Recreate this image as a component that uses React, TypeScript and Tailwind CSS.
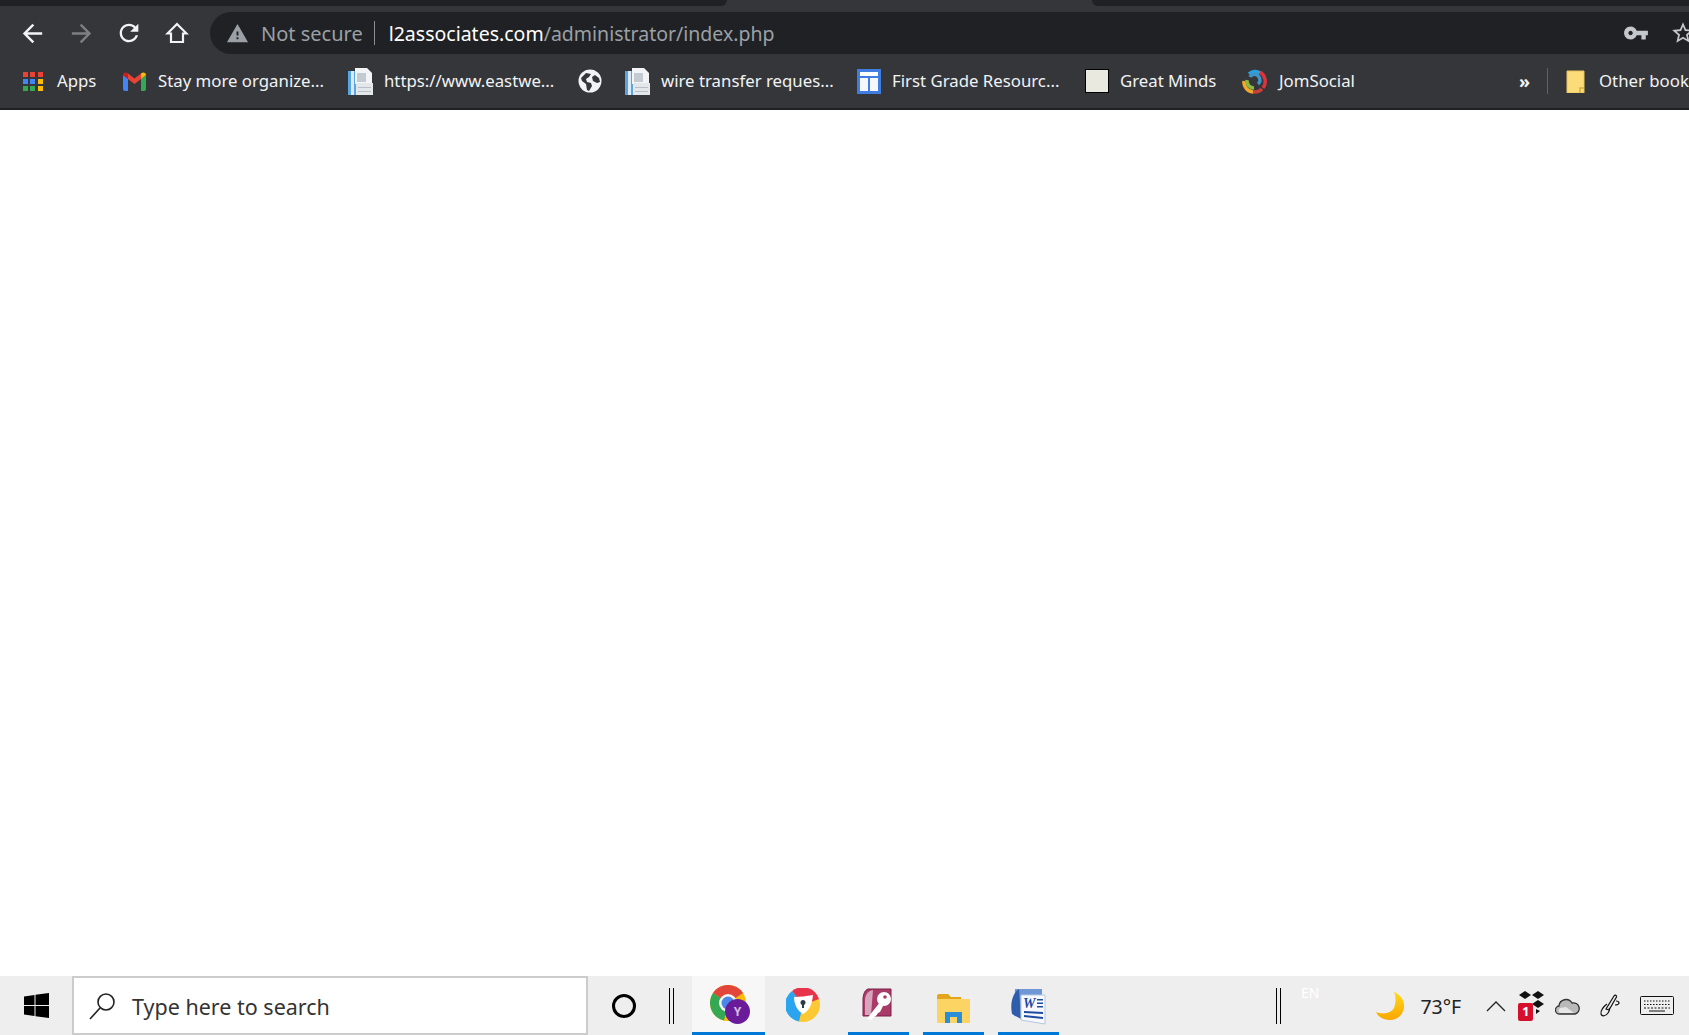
const uiFont = "font-['Noto_Sans','Open_Sans',sans-serif]";

const AppsIcon = () => {
  const colors = [
    "#ea4335", "#ea4335", "#ea4335",
    "#4285f4", "#4285f4", "#fbbc05",
    "#34a853", "#34a853", "#fbbc05",
  ];
  return (
    <div className="grid w-[20px] grid-cols-3 gap-[2px]">
      {colors.map((c, i) => (
        <div key={i} className="h-[5px] w-[5px]" style={{ backgroundColor: c }} />
      ))}
    </div>
  );
};

const GmailIcon = () => (
  <svg width="23" height="19" viewBox="0 0 23 19">
    <path d="M0 3v14a2 2 0 0 0 2 2h3V7z" fill="#4285f4" />
    <path d="M23 3v14a2 2 0 0 1-2 2h-3V7z" fill="#34a853" />
    <path d="M5 7l6.5 5L18 7V1.500l-6.500 5-6.500-5z" fill="#ea4335" />
    <path d="M0 3c0-2.500 3-3.500 5-1.500V7L0 3z" fill="#c5221f" />
    <path d="M23 3c0-2.500-3-3.500-5-1.500V7l5-4z" fill="#fbbc05" />
  </svg>
);

const DocIcon = () => (
  <svg width="25" height="27" viewBox="0 0 25 27">
    <path d="M0 3h8v24H0z" fill="#5aa5dc" />
    <path d="M3 3h3v24H3z" fill="#dbe9f4" />
    <path d="M7 0h12l5 5v11H7z" fill="#f2f4f6" />
    <path d="M9 5h9v9H9z" fill="#c3cad1" />
    <path d="M8 15h17v12H8z" fill="#e4e7ea" />
    <path d="M10 19h13v1H10zM10 23h13v1H10z" fill="#b8bfc6" />
  </svg>
);

const GlobeIcon = () => (
  <svg width="24" height="24" viewBox="0 0 24 24">
    <circle cx="12" cy="12" r="11.500" fill="#f1f3f4" />
    <path d="M3 9l5-5 5 1-2 3-3 2 1 3 4 1 1 3-3 5-2-1-1-6-4-3zM17 6l4 3 1 4-3 1-4-2-1-4z" fill="#35363a" />
  </svg>
);

const GradeIcon = () => (
  <svg width="24" height="25" viewBox="0 0 24 25">
    <rect width="24" height="25" fill="#3f7ee0" />
    <path d="M3 3h18v4H3z" fill="#fff" />
    <path d="M3 9h8v13H3zM13 9h8v13h-8z" fill="#f5f7fb" />
  </svg>
);

const JomIcon = () => (
  <svg width="26" height="26" viewBox="0 0 26 26" fill="none" strokeWidth="3.500">
    <path d="M8 6a9 9 0 0 1 11-1" stroke="#29a3dd" />
    <path d="M19 4a11 11 0 0 1 3 16" stroke="#d8363c" />
    <path d="M21 21a11 11 0 0 1-9 3" stroke="#c8403c" />
    <path d="M3 13a10 10 0 0 0 9 11" stroke="#f0a92c" />
    <path d="M6 12a7 7 0 0 0 7 8" stroke="#8cbb3f" />
    <path d="M9 9a5 5 0 0 1 9 0 5 5 0 0 1-1 7" stroke="#3f95c8" />
  </svg>
);

const GreatIcon = () => <div className="h-[24px] w-[24px] border border-black bg-[#e9e9df]" />;

const FolderTag = () => (
  <svg width="19" height="23" viewBox="0 0 19 23">
    <path d="M1 1h17v22H1z" fill="#fbdc79" stroke="#e8c45c" />
    <path d="M14 23v-5h4" fill="none" stroke="#d9ad3c" strokeWidth="1.500" />
  </svg>
);

const bookmarks = [
  { name: "Apps", icon: <AppsIcon />, cls: "w-[101px] pl-[1px]", gap: "gap-[14px]" },
  { name: "Stay more organize...", icon: <GmailIcon />, cls: "w-[225px]", gap: "gap-[12px]" },
  { name: "https://www.eastwe...", icon: <DocIcon />, cls: "w-[230px]", gap: "gap-[11px]" },
  { name: "", icon: <GlobeIcon />, cls: "w-[47px]", gap: "" },
  { name: "wire transfer reques...", icon: <DocIcon />, cls: "w-[232px]", gap: "gap-[11px]" },
  { name: "First Grade Resourc...", icon: <GradeIcon />, cls: "w-[228px]", gap: "gap-[11px]" },
  { name: "Great Minds", icon: <GreatIcon />, cls: "w-[156px]", gap: "gap-[11px]" },
  { name: "JomSocial", icon: <JomIcon />, cls: "w-[284px]", gap: "gap-[12px]" },
];

const WinLogo = () => (
  <svg width="25" height="25" viewBox="0 0 25 25" fill="#000">
    <path d="M0 3.500l10.500-1.500v10H0zM11.500 1.800L25 0v12H11.500zM0 13h10.500v10L0 21.500zM11.500 13H25v12l-13.500-1.800z" />
  </svg>
);

const ChromeIcon = () => (
  <div className="relative h-[44px] w-[44px]">
    <svg width="36" height="36" viewBox="0 0 36 36" className="absolute left-0 top-0">
      <circle cx="18" cy="18" r="18" fill="#fbbc05" />
      <path d="M18 18L3 8A18 18 0 0 1 33 8z" fill="#e2463a" />
      <path d="M18 18L3 8A18 18 0 0 0 14 35.500z" fill="#35a853" />
      <circle cx="18" cy="18" r="9" fill="#f4f4f4" />
      <circle cx="18" cy="18" r="6.500" fill="#4b87e8" />
    </svg>
    <div className="absolute left-[15px] top-[14px] flex h-[25px] w-[25px] items-center justify-center rounded-full bg-[#6a1b9a] text-[12px] font-bold text-[#d9b8e8]">
      Y
    </div>
  </div>
);

const SecureIcon = () => (
  <svg width="34" height="34" viewBox="0 0 34 34">
    <circle cx="17" cy="17" r="17" fill="#fcc934" />
    <path d="M17 17L6 3A17 17 0 0 1 33 11z" fill="#e8344a" />
    <path d="M17 17L6 3A17 17 0 0 0 13 33.500z" fill="#2aa4ef" />
    <path d="M8 9c6 0 12-1 19-2-1 9-3 15-10 19-5-3-9-9-9-17z" fill="#fff" />
    <circle cx="17" cy="14.500" r="2.500" fill="#2b3a4a" />
    <path d="M16 15h2v5h-2z" fill="#2b3a4a" />
  </svg>
);

const AccessIcon = () => (
  <svg width="32" height="33" viewBox="0 0 32 33">
    <path d="M7 1h23v27H2V12C2 6 4 2 7 1z" fill="#a83b68" stroke="#7a2148" />
    <path d="M4 12C4 7 7 3 12 2L10 27H4z" fill="#d9a4bb" />
    <circle cx="23" cy="11" r="7" fill="#fff" />
    <path d="M20 13L8 28l-2 3 4 1 3-3 2-1 2-3 2-1 3-6z" fill="#fff" />
    <circle cx="24" cy="9" r="1.800" fill="#a83b68" />
  </svg>
);

const ExplorerIcon = () => (
  <svg width="33" height="29" viewBox="0 0 33 29">
    <path d="M0 2a2 2 0 0 1 2-2h9l3 3h10v3H0z" fill="#e3a51a" />
    <path d="M0 5h33v23a1 1 0 0 1-1 1H1a1 1 0 0 1-1-1z" fill="#fcd463" />
    <path d="M8 18h17v11h-5v-6h-7v6H8z" fill="#2a8fd8" />
  </svg>
);

const WordIcon = () => (
  <svg width="36" height="37" viewBox="0 0 36 37">
    <path d="M5 1h27v30L4 28z" fill="#6f97d6" />
    <path d="M2 26C0 16 2 6 9 1l2 30z" fill="#2f5cab" />
    <path d="M11 7h24v29L11 32z" fill="#f7f9fd" stroke="#b7c6df" />
    <text x="13" y="20" fontSize="14" fontWeight="700" fontStyle="italic" fill="#1e4aa0" fontFamily="Liberation Serif, serif">W</text>
    <path d="M27 11h6v1.500h-6zM27 14.500h6V16h-6zM27 18h6v1.500h-6zM14 23l19 1v2l-19-1zM14 27l19 2v2l-19-2z" fill="#1e4aa0" />
  </svg>
);

const MoonIcon = () => (
  <svg width="30" height="30" viewBox="0 0 30 30">
    <defs>
      <linearGradient id="moon" x1="0" y1="0" x2="0" y2="1">
        <stop offset="0" stopColor="#ffd91a" />
        <stop offset="1" stopColor="#f9a602" />
      </linearGradient>
    </defs>
    <path d="M19 1c7 3 11 9 10 16-1 7-7 12-14 12-6 0-12-3-14-8 8 3 15 1 18-4 2-5 2-11 0-16z" fill="url(#moon)" />
  </svg>
);

const DropboxIcon = () => (
  <div className="relative h-[30px] w-[27px]">
    <svg width="27" height="24" viewBox="0 0 27 24" className="absolute left-0 top-0" fill="#111">
      <path d="M7 0l6 4-6 4-6-4zM20 0l6 4-6 4-6-4zM20 9l6 4-6 4-6-4zM18 18l4 2-4 3z" />
    </svg>
    <div className="absolute bottom-0 left-0 flex h-[18px] w-[15px] items-center justify-center rounded-[2px] bg-[#d4102c] text-[13px] font-bold leading-none text-white">
      1
    </div>
  </div>
);

const CloudIcon = () => (
  <svg width="25" height="18" viewBox="0 0 25 18">
    <path d="M5 17a4 4 0 0 1-1-8 7 7 0 0 1 13-3 5.500 5.500 0 0 1 3 11z" fill="#b9b9b9" stroke="#333" strokeWidth="1.300" />
    <path d="M5 16a3 3 0 0 1 0-5l6-1 8 6z" fill="#e6e6e6" />
  </svg>
);

const PenIcon = () => (
  <svg width="22" height="23" viewBox="0 0 22 23" fill="none" stroke="#111" strokeWidth="1.200">
    <path d="M7 15L15 2c1-1.500 3-.5 2.500 1L10 16z" />
    <path d="M8 10c-3 2-7 7-6 10s5 2 7-1 2-4 1-5" />
    <path d="M17 7c2 0 3 1 3 2s-2 2-4 2" />
  </svg>
);

const KeyboardIcon = () => (
  <svg width="34" height="19" viewBox="0 0 34 19" fill="none" stroke="#111">
    <rect x="0.500" y="0.500" width="33" height="18" rx="1" />
    <path d="M4 5h26M4 8.500h26" strokeDasharray="1.500 1.500" />
    <path d="M4 12h26" strokeDasharray="2 1.500" />
    <path d="M9 15h16" />
  </svg>
);

const Divider = () => (
  <div className="flex h-[36px] gap-[3px]">
    <div className="w-px bg-black" />
    <div className="w-px bg-black" />
  </div>
);

export default function App() {
  return (
    <div className={`flex h-screen w-screen flex-col overflow-hidden bg-white ${uiFont}`}>
      <header className="bg-[#35363a]">
        {/* tab strip, active tab is the gap in the middle */}
        <div className="flex h-[6px]">
          <div className="w-[727px] rounded-br-[6px] bg-[#202124]" />
          <div className="w-[365px]" />
          <div className="flex-1 rounded-bl-[6px] bg-[#202124]" />
        </div>
        <div className="mt-[6px] flex h-[42px] items-center">
          <div className="flex w-[210px] items-center text-white">
            <svg width="29" height="29" viewBox="0 0 24 24" fill="#f1f3f4" className="ml-[18px]">
              <path d="M20 11H7.830l5.590-5.590L12 4l-8 8 8 8 1.410-1.410L7.830 13H20v-2z" />
            </svg>
            <svg width="29" height="29" viewBox="0 0 24 24" fill="#7d7f83" className="ml-[20px]">
              <path d="M12 4l-1.410 1.410L16.170 11H4v2h12.170l-5.580 5.590L12 20l8-8z" />
            </svg>
            <svg width="28" height="28" viewBox="0 0 24 24" fill="#f1f3f4" className="ml-[19px]">
              <path d="M17.650 6.350C16.200 4.900 14.210 4 12 4c-4.420 0-7.990 3.580-7.990 8s3.570 8 7.990 8c3.730 0 6.840-2.550 7.730-6h-2.080c-.82 2.330-3.040 4-5.650 4-3.310 0-6-2.690-6-6s2.690-6 6-6c1.660 0 3.140.69 4.220 1.780L13 11h7V4l-2.350 2.350z" />
            </svg>
            <svg width="24" height="24" viewBox="0 0 24 24" fill="none" stroke="#f1f3f4" strokeWidth="2.200" className="ml-[22px]">
              <path d="M12 3L2.500 12.500H6V21h12v-8.500h3.500z" />
            </svg>
          </div>
          <div className="flex h-full flex-1 items-center rounded-l-[21px] bg-[#202124] pl-[16px]">
            <svg width="23" height="23" viewBox="0 0 24 24" fill="#9aa0a6">
              <path d="M1 21h22L12 2 1 21zm12-3h-2v-2h2v2zm0-4h-2v-4h2v4z" />
            </svg>
            <span className="ml-[12px] mt-[1px] text-[20px] text-[#9aa0a6]">Not secure</span>
            <div className="ml-[11px] h-[24px] w-px bg-[#8a8d91]" />
            <span className="ml-[14px] mt-[1px] text-[19.5px] text-white">
              l2associates.com<span className="text-[#9aa0a6]">/administrator/index.php</span>
            </span>
            <svg width="26" height="26" viewBox="0 0 24 24" fill="#c4c7cb" className="ml-auto">
              <path d="M12.650 10C11.830 7.670 9.610 6 7 6c-3.310 0-6 2.690-6 6s2.690 6 6 6c2.610 0 4.830-1.670 5.650-4H17v4h4v-4h2v-4H12.650zM7 14c-1.100 0-2-.9-2-2s.9-2 2-2 2 .9 2 2-.9 2-2 2z" />
            </svg>
            <svg width="26" height="26" viewBox="0 0 24 24" fill="#c4c7cb" className="ml-[21px] mr-[-7px] shrink-0">
              <path d="M22 9.240l-7.190-.62L12 2 9.190 8.630 2 9.240l5.460 4.730L5.820 21 12 17.270 18.180 21l-1.630-7.030L22 9.240zM12 15.400l-3.760 2.270 1-4.280-3.320-2.880 4.380-.38L12 6.100l1.710 4.040 4.380.38-3.320 2.880 1 4.280L12 15.400z" />
            </svg>
          </div>
        </div>
        <div className="flex h-[54px] items-center overflow-hidden whitespace-nowrap pl-[22px] text-[16.8px] text-[#f1f3f4]">
          {bookmarks.map((b, i) => (
            <div key={i} className={`flex shrink-0 items-center ${b.cls} ${b.gap}`}>
              {b.icon}
              {b.name && <span>{b.name}</span>}
            </div>
          ))}
          <span className="ml-[-6px] w-[28px] shrink-0 text-[18px] font-bold leading-none">»</span>
          <div className="h-[26px] w-px shrink-0 bg-[#5f6368]" />
          <div className="ml-[18px] flex shrink-0 items-center gap-[14px]">
            <FolderTag />
            <span>Other bookmarks</span>
          </div>
        </div>
        <div className="h-[2px] bg-[#202124]" />
      </header>

      <main className="flex-1 bg-white" />

      <footer className="flex h-[59px] items-stretch bg-[#eeeeee] text-black">
        <div className="flex w-[72px] items-center pl-[24px]">
          <WinLogo />
        </div>
        <div className="flex w-[516px] items-center border-2 border-[#cccccc] bg-white pl-[15px]">
          <svg width="27" height="28" viewBox="0 0 27 28" fill="none" stroke="#222" strokeWidth="1.600">
            <circle cx="17" cy="10" r="8" />
            <path d="M11 16L1 27" />
          </svg>
          <span className="ml-[16px] mt-[3px] text-[21.5px] text-[#333]">Type here to search</span>
        </div>
        <div className="flex w-[104px] items-center">
          <div className="ml-[24px] h-[24px] w-[24px] rounded-full border-[3px] border-black" />
          <div className="ml-[33px]">
            <Divider />
          </div>
        </div>
        <div className="flex w-[73px] justify-center border-b-[3px] border-[#0078d7] bg-[#f7f7f7] pl-[7px] pt-[9px]">
          <ChromeIcon />
        </div>
        <div className="flex w-[83px] items-start justify-center pr-[7px] pt-[12px]">
          <SecureIcon />
        </div>
        <div className="flex w-[61px] items-start justify-center border-b-[3px] border-[#0078d7] pr-[3px] pt-[12px]">
          <AccessIcon />
        </div>
        <div className="ml-[14px] flex w-[61px] items-start justify-center border-b-[3px] border-[#0078d7] pr-[1px] pt-[18px]">
          <ExplorerIcon />
        </div>
        <div className="ml-[14px] flex w-[61px] items-start justify-center border-b-[3px] border-[#0078d7] pr-[1px] pt-[12px]">
          <WordIcon />
        </div>
        <div className="ml-[217px] flex flex-1 items-center">
          <Divider />
          <span className="mb-[26px] ml-[20px] text-[14px] leading-none text-white">EN</span>
          <div className="ml-[56px]">
            <MoonIcon />
          </div>
          <span className="ml-[15px] mt-[2px] text-[19.5px] text-[#222]">73°F</span>
          <svg width="20" height="12" viewBox="0 0 20 12" fill="none" stroke="#222" strokeWidth="1.300" className="ml-[25px]">
            <path d="M1 11l9-9 9 9" />
          </svg>
          <div className="ml-[12px]">
            <DropboxIcon />
          </div>
          <div className="ml-[10px]">
            <CloudIcon />
          </div>
          <div className="ml-[19px]">
            <PenIcon />
          </div>
          <div className="ml-[19px]">
            <KeyboardIcon />
          </div>
        </div>
      </footer>
    </div>
  );
}
